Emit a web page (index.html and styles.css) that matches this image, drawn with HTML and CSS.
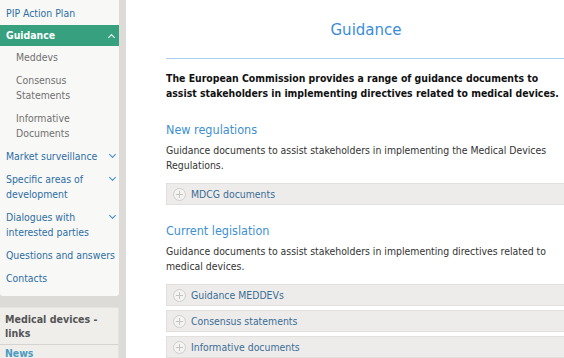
FILE: index.html
```html
<!DOCTYPE html>
<html>
  <head>
    <meta name="viewport" content="width=device-width,initial-scale=1.0">
    <title>Guidance - Medical devices</title>
    <link rel="stylesheet" href="styles.css">
  </head>
  <body>
    <div id="page">
      <div id="sidebar">
        <ul class="nav">
          <li><a href="#">PIP Action Plan</a></li>
          <li class="active"><a href="#">Guidance</a><span class="chev up"></span></li>
          <li class="sub"><a href="#">Meddevs</a></li>
          <li class="sub"><a href="#">Consensus Statements</a></li>
          <li class="sub"><a href="#">Informative Documents</a></li>
          <li><a href="#">Market surveillance</a><span class="chev"></span></li>
          <li><a href="#">Specific areas of development</a><span class="chev"></span></li>
          <li><a href="#">Dialogues with interested parties</a><span class="chev"></span></li>
          <li><a href="#">Questions and answers</a></li>
          <li><a href="#">Contacts</a></li>
        </ul>
        <div class="links">
          <h3>Medical devices - links</h3>
          <a href="#">News</a>
        </div>
      </div>

      <div id="main">
        <div class="content">
          <h1>Guidance</h1>
          <p class="intro">The European Commission provides a range of guidance documents to assist stakeholders in implementing directives related to medical devices.</p>

          <h2>New regulations</h2>
          <p>Guidance documents to assist stakeholders in implementing the Medical Devices Regulations.</p>
          <div class="acc"><span class="plus"></span>MDCG documents</div>

          <h2>Current legislation</h2>
          <p>Guidance documents to assist stakeholders in implementing directives related to medical devices.</p>
          <div class="acc"><span class="plus"></span>Guidance MEDDEVs</div>
          <div class="acc"><span class="plus"></span>Consensus statements</div>
          <div class="acc"><span class="plus"></span>Informative documents</div>
        </div>
      </div>
    </div>
  </body>
</html>
```

FILE: styles.css
```css
body { margin: 0; background: #dcdbd8; font-family: "DejaVu Sans Condensed", "DejaVu Sans", Verdana, sans-serif; font-size: 10.4px; overflow: hidden; }
a { text-decoration: none; }

#page { display: flex; height: 358px; }

/* left column */
#sidebar { width: 119px; flex-shrink: 0; }
.nav { list-style: none; margin: 0; padding: 2px 0 6px; background: #f8f8f7; border-radius: 0 0 3px 3px; }
.nav li { display: flex; justify-content: space-between; align-items: flex-start; padding: 4px 2px 4px 6px; line-height: 15px; }
.nav li a { color: #2d6ea3; }
.nav li.active { background: #36a07f; padding: 3px 3px 3px 6px; }
.nav li.active a { color: #fff; font-weight: bold; }
.nav li.sub { padding-left: 16px; }
.nav li.sub a { color: #707070; }
.chev { width: 4px; height: 4px; border-right: 1.5px solid #3a8ad8; border-bottom: 1.5px solid #3a8ad8; transform: rotate(45deg); margin: 3px 2px 0 0; flex-shrink: 0; }
.chev.up { border-color: #fff; transform: rotate(-135deg); margin-top: 7px; }

.links { margin-top: 11px; background: #efeeeb; border: 1px solid #e4e3e0; border-left: 0; }
.links h3 { margin: 0; padding: 4px 5px 4px; font-size: 10.6px; line-height: 14px; color: #555; border-bottom: 1px solid #d5d4d1; }
.links a { display: block; padding: 2px 5px; color: #4a9ac2; font-weight: bold; }

/* main column */
#main { flex: 1; margin-left: 7px; background: #fff; overflow: hidden; }
.content { width: 400px; margin-left: 40px; }
.content h1 { margin: 0; padding: 21px 0 19px; text-align: center; font-family: "DejaVu Sans", Verdana, sans-serif; font-size: 15px; font-weight: normal; color: #3a8ed8; border-bottom: 1px solid #a9d1ee; line-height: 18px; }
.content p { margin: 0; line-height: 15px; color: #333; }
.content p.intro { margin: 12px 0 21px; font-weight: bold; color: #111; }
.content h2 { margin: 0 0 5px; font-size: 12.5px; font-weight: normal; color: #3d8fd2; line-height: 16px; }
.content h2 + p { margin-bottom: 10px; }
.acc { display: flex; align-items: center; height: 20px; margin-bottom: 4px; padding-left: 6px; background: #edeceb; border: 1px solid #e1e0dd; color: #3b6d96; }
.acc + h2 { margin-top: 18px; }
.plus { position: relative; width: 11px; height: 11px; border: 1px solid #cfcecb; border-radius: 50%; margin-right: 5px; background: #f3f3f2; }
.plus::before, .plus::after { content: ""; position: absolute; background: #c4c3c0; left: 2px; top: 5px; width: 7px; height: 1px; }
.plus::after { left: 5px; top: 2px; width: 1px; height: 7px; }
```
